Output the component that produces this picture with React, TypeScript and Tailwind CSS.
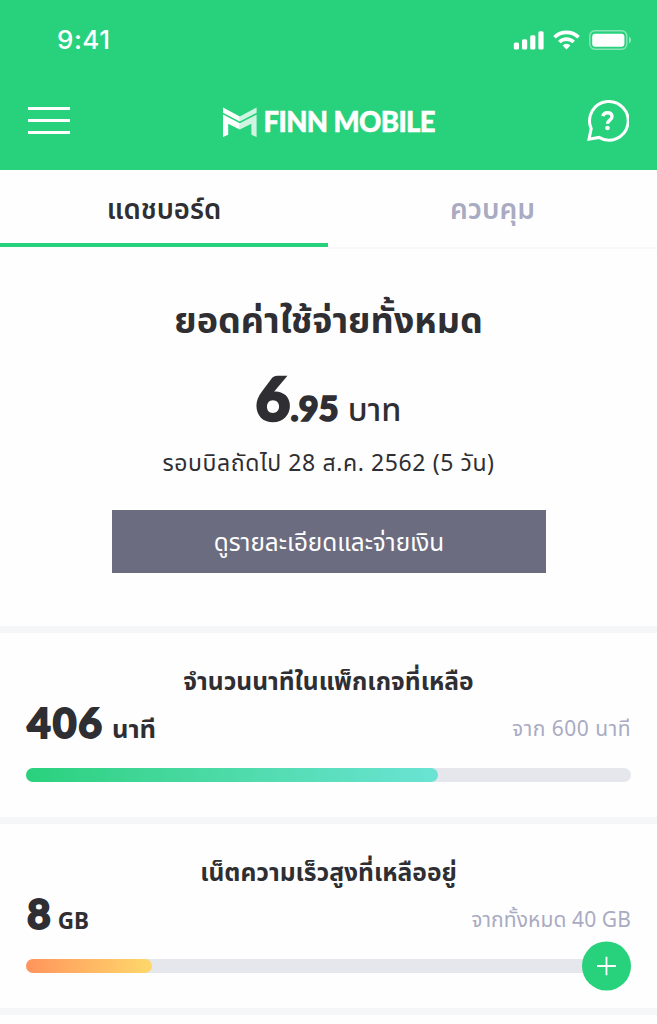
import React from "react";
import clsx from "clsx";

const StatusBar = () => (
  <div className="flex h-[80px] items-center justify-between pl-[57px] pr-[26px] text-white">
    <span className="font-['Inter'] text-[26px] font-medium leading-none tracking-[0.5px]">9:41</span>
    <div className="flex items-center gap-[9px]">
      <svg width="31" height="20" viewBox="0 0 31 20" fill="currentColor">
        <rect x="0.8" y="12.6" width="5.2" height="7" rx="1.5" />
        <rect x="9" y="9.2" width="5.2" height="10.4" rx="1.5" />
        <rect x="17.2" y="5.2" width="5.2" height="14.4" rx="1.5" />
        <rect x="25.4" y="1.2" width="5.2" height="18.4" rx="1.5" />
      </svg>
      <svg width="27" height="20" viewBox="0 0 27 20" fill="none" stroke="currentColor" strokeWidth="3.6">
        <path d="M1.5 7.3a17 17 0 0 1 24 0" />
        <path d="M6.3 12.1a10.2 10.2 0 0 1 14.4 0" />
        <path d="M9.6 15.4a5.6 5.6 0 0 1 7.8 0l-3.9 4z" fill="currentColor" stroke="none" />
      </svg>
      <svg width="42" height="20" viewBox="0 0 42 20" fill="none">
        <rect x="0.8" y="0.8" width="37" height="18.4" rx="5" stroke="white" strokeOpacity="0.45" strokeWidth="1.4" />
        <rect x="3.2" y="3.8" width="32.2" height="13" rx="3" fill="white" />
        <path d="M40 6.8c1.3.6 2 1.8 2 3.2s-.7 2.6-2 3.2z" fill="white" fillOpacity="0.5" />
      </svg>
    </div>
  </div>
);

const Logo = () => (
  <div className="ml-[2px] flex items-center gap-[7px] text-white">
    <svg width="34" height="30" viewBox="0 0 34 30" fill="currentColor">
      <path d="M0 0.5 16.8 9.4v5L0 5.8z" />
      <path d="M0 7.6 16.8 16.2v6.3L5.2 16.8v11L0 30z" />
      <path d="M33.6 0.5 16.8 9.4v5l16.8-8.6z" fillOpacity="0.78" />
      <path d="M33.6 7.6 16.8 16.2v6.3l11.6-5.7v11l5.2 2.2z" fillOpacity="0.78" />
    </svg>
    <span className="w-[172px] whitespace-nowrap pt-[1px] font-['Lato'] text-[27.5px] font-black leading-[30px] tracking-[-0.6px] [-webkit-text-stroke:0.5px_white]">
      FINN MOBILE
    </span>
  </div>
);

const Header = () => (
  <header className="h-[170px] bg-[#28d17c]">
    <StatusBar />
    <div className="flex h-[81px] items-center justify-between px-7">
      <button aria-label="Menu" className="flex w-[42px] flex-col gap-[9px]">
        <span className="h-[3px] bg-white" />
        <span className="h-[3px] bg-white" />
        <span className="h-[3px] bg-white" />
      </button>
      <div className="mt-[2px]">
        <Logo />
      </div>
      <button aria-label="Help">
        <svg width="43" height="43" viewBox="0 0 43 43" fill="none" stroke="white" strokeWidth="3">
          <path d="M5.2 29.6A19.3 19.3 0 1 1 13 38.4L3 40.2z" strokeLinejoin="miter" />
          <path d="M16.9 17.2c.5-2.4 2.2-3.4 4.5-3.4 2.8 0 4.6 1.5 4.6 3.9 0 3.2-4.5 3.7-4.5 7" strokeWidth="3.4" />
          <circle cx="21.5" cy="29" r="2.3" fill="white" stroke="none" />
        </svg>
      </button>
    </div>
  </header>
);

const Tabs = () => (
  <nav className="flex h-[79px] text-[27.5px] leading-[77px]">
    <button className="h-[77px] w-[328px] border-b-[4px] border-[#28d17c] font-semibold text-[#2f2f33]">
      แดชบอร์ด
    </button>
    <button className="h-[79px] flex-1 border-b-2 border-[#f8f8f9] text-[28px] font-semibold text-[#a9abc2]">
      ควบคุม
    </button>
  </nav>
);

type UsageProps = {
  title: string;
  amount: string;
  unit: string;
  unitClass: string;
  total: string;
  totalClass: string;
  percent: number;
  barClass: string;
  action?: boolean;
};

const Usage = ({ title, amount, unit, unitClass, total, totalClass, percent, barClass, action }: UsageProps) => (
  <section className="h-[191px] border-b-[7px] border-[#f5f6f7] px-[26px] pt-[28px]">
    <h2 className="h-[40px] whitespace-nowrap text-center text-[24.6px] font-bold leading-[40px]">{title}</h2>
    <div className="flex h-[44px] items-start justify-between">
      <p className="flex items-baseline pl-[1px] font-bold">
        <span className="font-['Lato'] text-[41px] font-black leading-[44px] tracking-[1.9px] [-webkit-text-stroke:1.8px_#2f2f33]">
          {amount}
        </span>
        <span className={clsx("leading-[44px]", unitClass)}>{unit}</span>
      </p>
      <span className={clsx("whitespace-nowrap leading-[55px] text-[#a9abc2]", totalClass)}>{total}</span>
    </div>
    <div className="relative mt-[23px] h-[14px] rounded-full bg-[#e6e7ec]">
      <div className={clsx("h-full rounded-full", barClass)} style={{ width: `${percent}%` }} />
      {action && (
        <button
          aria-label="Add"
          className="absolute right-0 top-1/2 flex size-[49px] -translate-y-1/2 items-center justify-center rounded-full bg-[#28d17c]"
        >
          <svg width="19" height="19" viewBox="0 0 19 19" stroke="white" strokeWidth="1.8">
            <path d="M9.5 0v19M0 9.5h19" />
          </svg>
        </button>
      )}
    </div>
  </section>
);

const App = () => {
  return (
    <div className="h-[1024px] w-[657px] overflow-hidden bg-[#fefefe] font-['Noto_Sans','Noto_Sans_Thai',sans-serif] text-[#2f2f33]">
      <Header />
      <Tabs />

      {/* Current bill */}
      <section className="flex h-[384px] flex-col items-center whitespace-nowrap border-b-[7px] border-[#f5f6f7] pt-[46px]">
        <h1 className="h-[50px] text-[36px] font-bold leading-[50px]">ยอดค่าใช้จ่ายทั้งหมด</h1>
        <p className="mt-[21px] h-[64px] leading-[64px]">
          <span className="font-['Lato'] text-[60px] font-black [-webkit-text-stroke:2.6px_#2f2f33]">6</span>
          <span className="font-['Lato'] text-[34px] font-black tracking-[0.3px] [-webkit-text-stroke:1.7px_#2f2f33]">.95</span>
          <span className="ml-[9px] text-[32.5px] font-medium">บาท</span>
        </p>
        <p className="mt-[12px] h-[40px] text-[23px] leading-[40px] tracking-[0.6px]">รอบบิลถัดไป 28 ส.ค. 2562 (5 วัน)</p>
        <button className="ml-[1px] mt-[28px] h-[63px] w-[434px] bg-[#6b6c80] text-[24.3px] leading-[61px] text-white">
          ดูรายละเอียดและจ่ายเงิน
        </button>
      </section>

      <Usage
        title="จำนวนนาทีในแพ็กเกจที่เหลือ"
        amount="406"
        unit="นาที"
        unitClass="ml-[8px] text-[25.5px]"
        total="จาก 600 นาที"
        totalClass="text-[21px] tracking-[0.5px]"
        percent={68.1}
        barClass="bg-gradient-to-r from-[#28d17c] to-[#6ae3d4]"
      />
      <Usage
        title="เน็ตความเร็วสูงที่เหลืออยู่"
        amount="8"
        unit="GB"
        unitClass="ml-[5px] text-[22.5px]"
        total="จากทั้งหมด 40 GB"
        totalClass="text-[21px] tracking-[0.1px]"
        percent={20.9}
        barClass="bg-gradient-to-r from-[#ff945c] to-[#fdd86b]"
        action
      />
    </div>
  );
};

export default App;
